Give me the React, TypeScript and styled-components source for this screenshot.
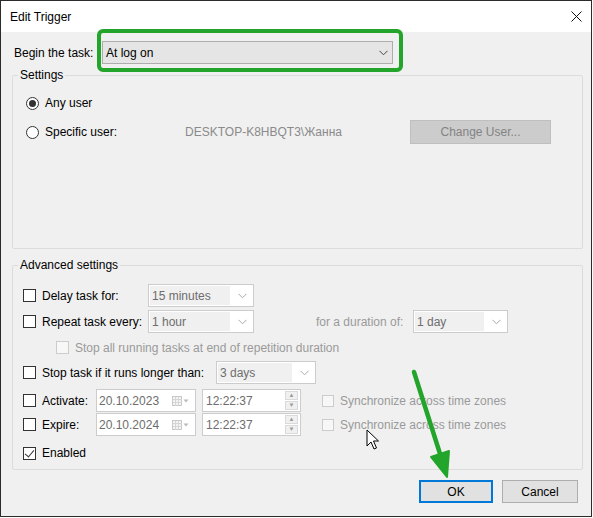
import styled, { createGlobalStyle } from 'styled-components'

const GlobalStyle = createGlobalStyle`
    html, body {
        margin: 0;
        padding: 0;
        background: #ffffff;
    }
    body {
        font-family: 'Liberation Sans', Arial, sans-serif;
        font-size: 12px;
        color: #000000;
    }
`

const Chevron = ({ color = '#a9a9a9' }: { color?: string }) => (
    <svg width="9" height="6" viewBox="0 0 9 6">
        <path d="M0.5 0.8 L4.5 4.8 L8.5 0.8" fill="none" stroke={color} strokeWidth="1" />
    </svg>
)

const CalendarIcon = () => (
    <svg width="17" height="10" viewBox="0 0 17 10">
        <rect x="0.5" y="0.5" width="9" height="9" fill="#f4f4f4" stroke="#c8c8c8" />
        <path d="M0.5 3.5 H9.5 M0.5 6.5 H9.5 M3.5 0.5 V9.5 M6.5 0.5 V9.5" stroke="#d6d6d6" />
        <path d="M11.5 3.5 L16.5 3.5 L14 6.5 Z" fill="#b9b9b9" />
    </svg>
)

const App = () => {
    return (
        <>
            <GlobalStyle />
            <Window>
                <TitleBar>
                    <span>Edit Trigger</span>
                    <svg width="11" height="11" viewBox="0 0 11 11">
                        <path d="M0.5 0.5 L10.5 10.5 M10.5 0.5 L0.5 10.5" stroke="#111" strokeWidth="1" />
                    </svg>
                </TitleBar>

                <Body>
                    <BeginRow>
                        <Label $w={88} style={{ marginLeft: 2 }}>Begin the task:</Label>
                        <Highlight>
                            <MainCombo>
                                <span>At log on</span>
                                <Chevron color="#444" />
                            </MainCombo>
                        </Highlight>
                    </BeginRow>

                    <Group $mt={3}>
                        <Legend>Settings</Legend>
                        <GroupInner $h={165} $pt={12} $pl={13}>
                            <Row $h={16}>
                                <Radio $checked />
                                <Label>Any user</Label>
                            </Row>
                            <Row $mt={9} $h={24}>
                                <Radio />
                                <Label $w={140}>Specific user:</Label>
                                <UserName>DESKTOP-K8HBQT3\Жанна</UserName>
                                <DisabledButton>Change User...</DisabledButton>
                            </Row>
                        </GroupInner>
                    </Group>

                    <Group $mt={8}>
                        <Legend>Advanced settings</Legend>
                        <GroupInner $h={196} $pt={11} $pl={10}>
                            <Row>
                                <CheckBox />
                                <Label $w={106}>Delay task for:</Label>
                                <Combo $w={106}>
                                    <ComboText>15 minutes</ComboText>
                                    <Chevron />
                                </Combo>
                            </Row>
                            <Row $mt={3}>
                                <CheckBox />
                                <Label $w={106}>Repeat task every:</Label>
                                <Combo $w={106}>
                                    <ComboText>1 hour</ComboText>
                                    <Chevron />
                                </Combo>
                                <GrayText $w={97} $ml={62}>for a duration of:</GrayText>
                                <Combo $w={95}>
                                    <ComboText>1 day</ComboText>
                                    <Chevron />
                                </Combo>
                            </Row>
                            <Row $mt={3} $indent={33}>
                                <CheckBox $disabled />
                                <GrayText>Stop all running tasks at end of repetition duration</GrayText>
                            </Row>
                            <Row $mt={2}>
                                <CheckBox />
                                <Label $w={174}>Stop task if it runs longer than:</Label>
                                <Combo $w={100}>
                                    <ComboText>3 days</ComboText>
                                    <Chevron />
                                </Combo>
                            </Row>
                            <Row $mt={5}>
                                <CheckBox />
                                <Label $w={54}>Activate:</Label>
                                <DateBox>
                                    <span>20.10.2023</span>
                                    <CalendarIcon />
                                </DateBox>
                                <TimeBox>
                                    <span>12:22:37</span>
                                    <Spinner>
                                        <SpinBtn>▲</SpinBtn>
                                        <SpinBtn>▼</SpinBtn>
                                    </Spinner>
                                </TimeBox>
                                <CheckBox $disabled $size={12} style={{ marginLeft: 21 }} />
                                <GrayText>Synchronize across time zones</GrayText>
                            </Row>
                            <Row $mt={1}>
                                <CheckBox />
                                <Label $w={54}>Expire:</Label>
                                <DateBox>
                                    <span>20.10.2024</span>
                                    <CalendarIcon />
                                </DateBox>
                                <TimeBox>
                                    <span>12:22:37</span>
                                    <Spinner>
                                        <SpinBtn>▲</SpinBtn>
                                        <SpinBtn>▼</SpinBtn>
                                    </Spinner>
                                </TimeBox>
                                <CheckBox $disabled $size={12} style={{ marginLeft: 21 }} />
                                <GrayText>Synchronize across time zones</GrayText>
                            </Row>
                            <Row $mt={9} $h={16}>
                                <CheckBox $checked />
                                <Label>Enabled</Label>
                            </Row>
                        </GroupInner>
                    </Group>

                    <ButtonRow>
                        <Button $default>OK</Button>
                        <Button>Cancel</Button>
                    </ButtonRow>
                </Body>

                <Overlay width="593" height="518" viewBox="0 0 593 518">
                    <path d="M414 372 L442 460" stroke="#22a52a" strokeWidth="4.5" strokeLinecap="round" />
                    <path d="M447 477 L431 457 L449 451 Z" fill="#22a52a" stroke="#22a52a" strokeWidth="2" strokeLinejoin="round" />
                    <path
                        d="M367 430 L367 446 L371 442 L374 449 L376.5 448 L373.5 441 L378.5 441 Z"
                        fill="#ffffff"
                        stroke="#000000"
                        strokeWidth="1"
                        strokeLinejoin="miter"
                    />
                </Overlay>
            </Window>
        </>
    )
}

const Window = styled.div`
    position: relative;
    box-sizing: border-box;
    width: 592px;
    height: 517px;
    border: 1px solid #2b2b2b;
    background: #f0f0f0;
    display: flex;
    flex-direction: column;
`

const TitleBar = styled.div`
    height: 31px;
    background: #ffffff;
    display: flex;
    align-items: center;
    justify-content: space-between;
    padding: 0 9px 0 9px;
    font-size: 12px;
`

const Body = styled.div`
    display: flex;
    flex-direction: column;
    padding: 0 8px 0 11px;
`

const BeginRow = styled.div`
    display: flex;
    align-items: center;
    height: 23px;
    margin-top: 9px;
`

const Label = styled.span<{ $w?: number }>`
    flex: none;
    width: ${(p) => (p.$w ? `${p.$w}px` : 'auto')};
    white-space: nowrap;
    line-height: 16px;
`

const GrayText = styled(Label)<{ $ml?: number }>`
    color: #9a9a9a;
    margin-left: ${(p) => p.$ml ?? 0}px;
`

const Highlight = styled.div`
    position: relative;

    &::after {
        content: '';
        position: absolute;
        top: -12px;
        bottom: -8px;
        left: -5px;
        right: -10px;
        border: 4px solid #22a52a;
        border-radius: 6px;
        pointer-events: none;
    }
`

const MainCombo = styled.div`
    box-sizing: border-box;
    width: 291px;
    height: 23px;
    background: #e5e5e5;
    border: 1px solid #adadad;
    display: flex;
    align-items: center;
    justify-content: space-between;
    padding: 0 4px 0 3px;
`

const Group = styled.fieldset<{ $mt: number }>`
    box-sizing: border-box;
    width: 571px;
    margin: ${(p) => p.$mt}px 0 0 0;
    padding: 0;
    border: 1px solid #dcdcdc;
    border-radius: 2px;
    min-inline-size: 0;
`

const Legend = styled.legend`
    margin-left: 5px;
    padding: 0 2px;
    line-height: 16px;
    font-size: 12px;
`

const GroupInner = styled.div<{ $h: number; $pt: number; $pl: number }>`
    box-sizing: border-box;
    height: ${(p) => p.$h}px;
    padding: ${(p) => p.$pt}px 0 0 ${(p) => p.$pl}px;
    display: flex;
    flex-direction: column;
`

const Row = styled.div<{ $mt?: number; $h?: number; $indent?: number }>`
    display: flex;
    align-items: center;
    height: ${(p) => p.$h ?? 23}px;
    margin-top: ${(p) => p.$mt ?? 0}px;
    padding-left: ${(p) => p.$indent ?? 0}px;
`

const Radio = styled.span<{ $checked?: boolean }>`
    box-sizing: border-box;
    flex: none;
    width: 13px;
    height: 13px;
    border: 1px solid #333333;
    border-radius: 50%;
    background: #ffffff;
    margin-right: 6px;
    display: flex;
    align-items: center;
    justify-content: center;

    &::after {
        content: '';
        display: ${(p) => (p.$checked ? 'block' : 'none')};
        width: 7px;
        height: 7px;
        border-radius: 50%;
        background: #333333;
    }
`

const CheckBox = styled.span<{ $checked?: boolean; $disabled?: boolean; $size?: number }>`
    box-sizing: border-box;
    flex: none;
    position: relative;
    width: ${(p) => p.$size ?? 13}px;
    height: ${(p) => p.$size ?? 13}px;
    border: 1px solid ${(p) => (p.$disabled ? '#cccccc' : '#333333')};
    background: ${(p) => (p.$disabled ? '#f7f7f7' : '#ffffff')};
    margin-right: 6px;

    &::after {
        content: '';
        display: ${(p) => (p.$checked ? 'block' : 'none')};
        position: absolute;
        left: 3px;
        top: 0px;
        width: 4px;
        height: 8px;
        border: solid #333333;
        border-width: 0 1px 1px 0;
        transform: rotate(40deg);
    }
`

const UserName = styled.span`
    width: 225px;
    color: #8a8a8a;
    white-space: nowrap;
`

const DisabledButton = styled.div`
    box-sizing: border-box;
    width: 141px;
    height: 24px;
    background: #cccccc;
    border: 1px solid #bfbfbf;
    color: #838383;
    display: flex;
    align-items: center;
    justify-content: center;
`

const Combo = styled.div<{ $w: number }>`
    box-sizing: border-box;
    flex: none;
    width: ${(p) => p.$w}px;
    height: 23px;
    background: #ffffff;
    border: 1px solid #cccccc;
    display: flex;
    align-items: center;
    padding: 1px 6px 1px 1px;
    gap: 8px;
`

const ComboText = styled.span`
    flex: 1;
    align-self: stretch;
    display: flex;
    align-items: center;
    padding-left: 2px;
    background: #f0f0f0;
    color: #6d6d6d;
    white-space: nowrap;
`

const DateBox = styled.div`
    box-sizing: border-box;
    flex: none;
    width: 100px;
    height: 23px;
    background: #ffffff;
    border: 1px solid #cccccc;
    display: flex;
    align-items: center;
    justify-content: space-between;
    padding: 0 6px 0 2px;
    color: #6d6d6d;
    margin-right: 6px;
`

const TimeBox = styled(DateBox)`
    width: 99px;
    padding: 0 2px 0 3px;
    margin-right: 0;
`

const Spinner = styled.div`
    display: flex;
    flex-direction: column;
    gap: 1px;
`

const SpinBtn = styled.span`
    box-sizing: border-box;
    width: 13px;
    height: 9px;
    background: #f0f0f0;
    border: 1px solid #dadada;
    color: #9a9a9a;
    font-size: 6px;
    line-height: 7px;
    text-align: center;
`

const ButtonRow = styled.div`
    display: flex;
    justify-content: flex-end;
    gap: 9px;
    margin-top: 10px;
    padding-right: 5px;
`

const Button = styled.div<{ $default?: boolean }>`
    box-sizing: border-box;
    width: ${(p) => (p.$default ? 74 : 76)}px;
    height: 23px;
    background: #e1e1e1;
    border: ${(p) => (p.$default ? '2px solid #0078d7' : '1px solid #adadad')};
    display: flex;
    align-items: center;
    justify-content: center;
`

const Overlay = styled.svg`
    position: absolute;
    top: -1px;
    left: -1px;
    pointer-events: none;
`

export default App
